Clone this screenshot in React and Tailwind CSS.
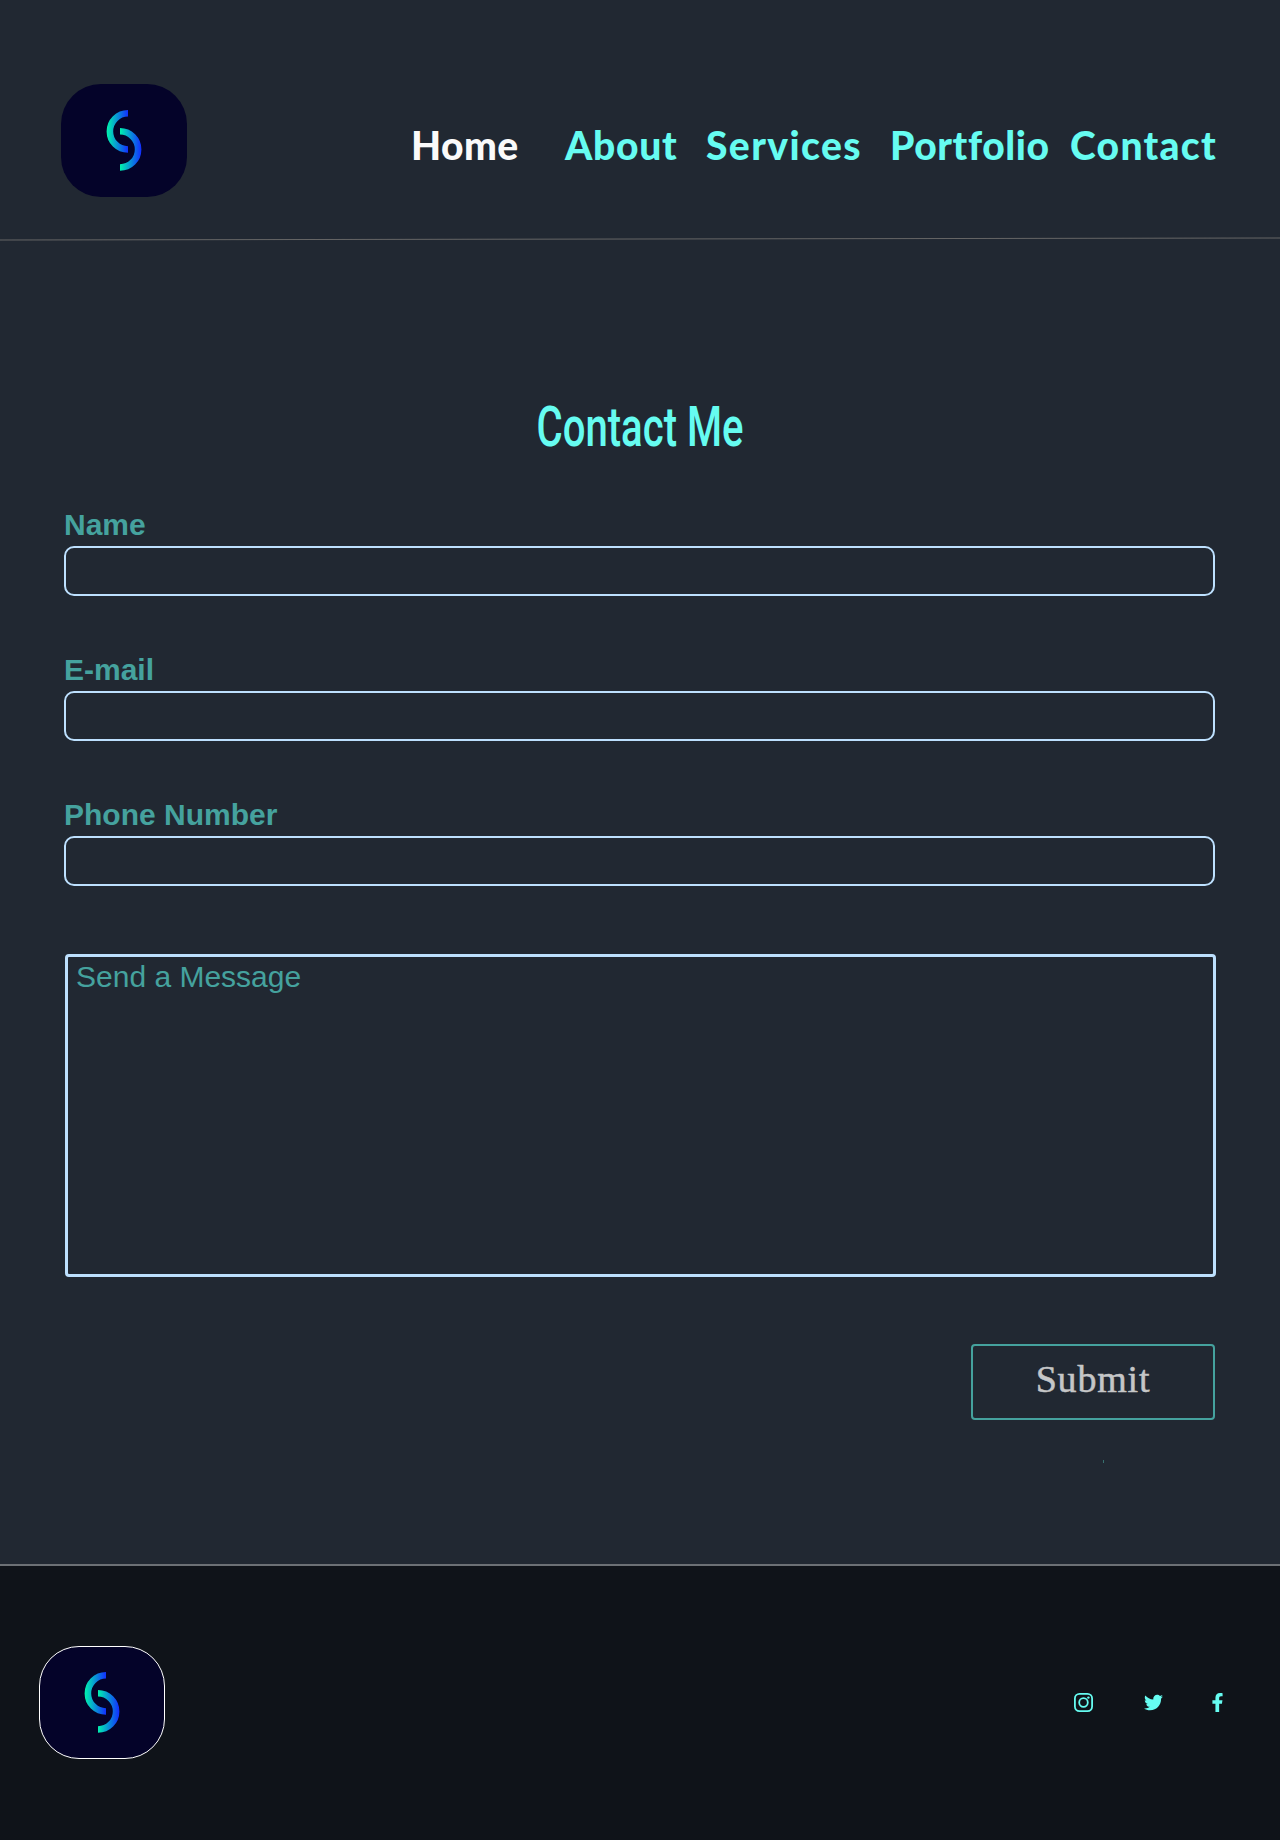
import { FaTwitter, FaFacebookF } from "react-icons/fa";

const fields = [
  { id: "name", label: "Name", type: "text" },
  { id: "email", label: "E-mail", type: "email" },
  { id: "phone", label: "Phone Number", type: "tel" },
];

const links = [
  { label: "Home", cls: "w-[154px] text-[#fafafa] tracking-[0.4px]" },
  { label: "About", cls: "w-[141px] text-[#66fcf1] tracking-[0.7px]" },
  { label: "Services", cls: "w-[184px] text-[#66fcf1] tracking-[1.4px]" },
  { label: "Portfolio", cls: "w-[180px] text-[#66fcf1] tracking-[0.6px]" },
  { label: "Contact", cls: "w-[150px] text-[#66fcf1] tracking-[1.3px]" },
];

function Logo({ id, className = "" }) {
  return (
    <div className={`h-[113px] w-[126px] shrink-0 overflow-hidden rounded-[40px] bg-[#040329] ${className}`}>
      <svg viewBox="0 0 126 113" className="h-[113px] w-[126px]" fill="none" strokeWidth="6.6">
        <defs>
          <linearGradient id={`${id}-a`} gradientUnits="userSpaceOnUse" x1="46" y1="0" x2="67" y2="0">
            <stop stopColor="#00f2ae" />
            <stop offset="1" stopColor="#1230ff" />
          </linearGradient>
          <linearGradient id={`${id}-b`} gradientUnits="userSpaceOnUse" x1="59" y1="0" x2="80" y2="0">
            <stop stopColor="#00f2ae" />
            <stop offset="1" stopColor="#1230ff" />
          </linearGradient>
        </defs>
        <path d="M67 29.3A18.1 18.1 0 0 0 67 65.5" stroke={`url(#${id}-a)`} />
        <path d="M59 47.3A18.1 18.1 0 0 1 59 83.5" stroke={`url(#${id}-b)`} />
      </svg>
    </div>
  );
}

export default function App() {
  return (
    <div className="flex h-[1840px] w-[1280px] flex-col overflow-hidden bg-[#212832] font-['Liberation_Sans',sans-serif]">
      <header className="flex h-[237px] shrink-0 pl-[61px] pt-[84px]">
        <Logo id="top" />
        <nav className="ml-[224px] mt-[36px] flex font-['Lato',sans-serif] text-[39px] font-black leading-[50px]">
          {links.map((l) => (
            <a key={l.label} href="#" className={`shrink-0 whitespace-nowrap ${l.cls}`}>
              {l.label}
            </a>
          ))}
        </nav>
      </header>
      <svg viewBox="0 0 1280 4" className="h-1 w-full shrink-0">
        <line x1="0" y1="3" x2="1280" y2="1" stroke="#666666" strokeWidth="1" />
      </svg>

      <main className="h-[1323px] shrink-0 pl-16 pt-[146px]">
        <h1 className="ml-[-64px] h-20 origin-center scale-x-[0.716] text-center font-['Roboto',sans-serif] text-[56px] font-medium leading-[80px] text-[#66fcf1]">
          Contact Me
        </h1>
        <form className="w-[1152px]">
          <div className="mt-[41px] flex flex-col gap-[57px]">
            {fields.map((f) => (
              <div key={f.id} className="h-[88px] w-[1151px]">
                <label htmlFor={f.id} className="block h-[38px] text-[30px] font-bold leading-[34px] text-[#45a29e]">
                  {f.label}
                </label>
                <input id={f.id} type={f.type} className="block h-[50px] w-full rounded-[10px] border-2 border-[#bde0fe] bg-transparent px-3" />
              </div>
            ))}
          </div>
          <textarea
            placeholder="Send a Message"
            className="ml-px mt-[68px] block h-[323px] w-[1151px] resize-none rounded-[4px] border-[3px] border-[#bde0fe] bg-transparent px-2 py-[3px] text-[30px] leading-[34px] placeholder:text-[#45a29e]"
          />
          <button
            type="button"
            className="ml-auto mr-px mt-[67px] block h-[76px] w-[244px] rounded-[4px] border-2 border-[#45a29e] pb-[7px] font-['Liberation_Serif',serif] text-[38px] leading-[50px] tracking-[0.8px] text-[#c5c6c7] [-webkit-text-stroke:0.5px_#c5c6c7]"
          >
            Submit
          </button>
        </form>
        <div className="ml-[1039px] mt-10 h-[3px] w-px bg-[#37716f]" />
      </main>

      <footer className="flex grow items-start border-t-2 border-[#6c7075] bg-[#0f1319] pl-[39px] pt-20">
        <Logo id="bottom" className="border border-white *:-ml-px *:-mt-px" />
        <div className="ml-[909px] mt-[47px] flex h-[19px] items-center text-[#66fcf1]">
          <svg viewBox="0 0 19 19" className="h-[19px] w-[19px]" fill="none" stroke="currentColor" strokeWidth="1.8">
            <rect x="0.9" y="0.9" width="17.2" height="17.2" rx="4.6" />
            <circle cx="9.5" cy="9.5" r="4.3" />
            <circle cx="14.4" cy="4.6" r="1.2" fill="currentColor" stroke="none" />
          </svg>
          <FaTwitter className="-mt-px ml-[51px] h-[19px] w-[19px]" />
          <FaFacebookF className="ml-[45px] h-[19px] w-[19px]" />
        </div>
      </footer>
    </div>
  );
}
